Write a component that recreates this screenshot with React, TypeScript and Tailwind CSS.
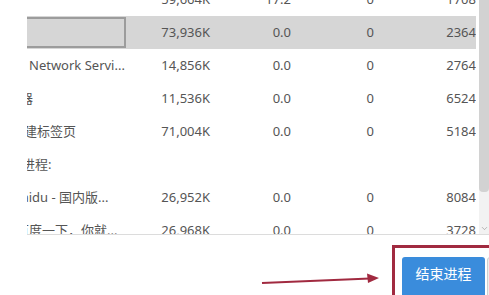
import { ChevronDown } from "lucide-react";

type Row = {
  name?: string;
  shift?: number;
  mem?: string;
  cpu?: string;
  disk?: string;
  net?: string;
  selected?: boolean;
  group?: boolean;
};

const rows: Row[] = [
  { mem: "59,664K", cpu: "17.2", disk: "0", net: "1708" },
  { mem: "73,936K", cpu: "0.0", disk: "0", net: "2364", selected: true },
  { name: "Network Servi...", shift: 2, mem: "14,856K", cpu: "0.0", disk: "0", net: "2764" },
  { name: "管理器", shift: -33, mem: "11,536K", cpu: "0.0", disk: "0", net: "6524" },
  { name: "新建标签页", shift: -16, mem: "71,004K", cpu: "0.0", disk: "0", net: "5184" },
  { name: "后台进程:", shift: -31, group: true },
  { name: "Baidu - 国内版...", shift: -14, mem: "26,952K", cpu: "0.0", disk: "0", net: "8084" },
  { name: "百度一下，你就...", shift: -11, mem: "26,968K", cpu: "0.0", disk: "0", net: "3728" },
];

const ProcessRow = ({ row }: { row: Row }) => (
  <div
    className={`flex h-[33px] items-center ${row.selected ? "bg-[#d6d6d6]" : ""}`}
  >
    <div className="flex h-full w-[103px] shrink-0 items-center overflow-hidden">
      {row.selected ? (
        <div className="-ml-[2px] h-[31px] w-[101px] shrink-0 border-2 border-[#9c9c9c]" />
      ) : (
        <span
          className="whitespace-nowrap"
          style={{ marginLeft: row.shift ?? 0 }}
        >
          {row.name}
        </span>
      )}
    </div>
    <div className="w-[82px] shrink-0 pr-[2px] text-right">{row.mem}</div>
    <div className="w-[82px] shrink-0 pr-[3px] text-right">{row.cpu}</div>
    <div className="w-[82px] shrink-0 pr-[2px] text-right">{row.disk}</div>
    <div className="w-[100px] shrink-0 text-right">{row.net}</div>
  </div>
);

export default function App() {
  return (
    <div className="relative h-[295px] w-[489px] overflow-hidden bg-white font-['Noto_Sans','Noto_Sans_CJK_SC',sans-serif] text-[13px] text-[#555555]">
      <div className="flex h-[234px]">
        <div className="w-[27px] shrink-0" />
        <div className="w-[449px] shrink-0 overflow-hidden">
          <div className="-mt-[17px]">
            {rows.map((row, i) => (
              <ProcessRow key={i} row={row} />
            ))}
          </div>
        </div>
        <div className="w-[3px] shrink-0" />
        <div className="flex w-[10px] shrink-0 flex-col bg-[#f2f2f2]">
          <div className="h-[192px] rounded-b-[4px] bg-[#d2d2d2]" />
          <div className="flex flex-1 items-end justify-center pb-[1px]">
            <ChevronDown size={9} strokeWidth={1.5} className="text-[#8a8a8a]" />
          </div>
        </div>
      </div>
      <div className="ml-[27px] h-px bg-[#dcdcdc]" />

      <div className="flex gap-[2px] pl-[402px] pt-[22px]">
        <button
          type="button"
          className="h-[44px] w-[83px] shrink-0 rounded-[3px] bg-[#3a8cdc] pb-[12px] text-[14px] text-white"
        >
          结束进程
        </button>
        <div className="h-[44px] w-[20px] shrink-0 rounded-[3px] border border-[#cfcfcf] bg-[#eeeeee]" />
      </div>

      <div className="absolute left-[392px] top-[245px] h-[100px] w-[140px] border-[3px] border-[#a12a40]" />
      <svg
        className="absolute left-[258px] top-[270px]"
        width="130"
        height="18"
        viewBox="0 0 130 18"
      >
        <line x1="4" y1="13" x2="112" y2="8.5" stroke="#a12a40" strokeWidth="2.2" />
        <polygon points="121,8 109,3.5 110,13" fill="#a12a40" />
      </svg>
    </div>
  );
}
